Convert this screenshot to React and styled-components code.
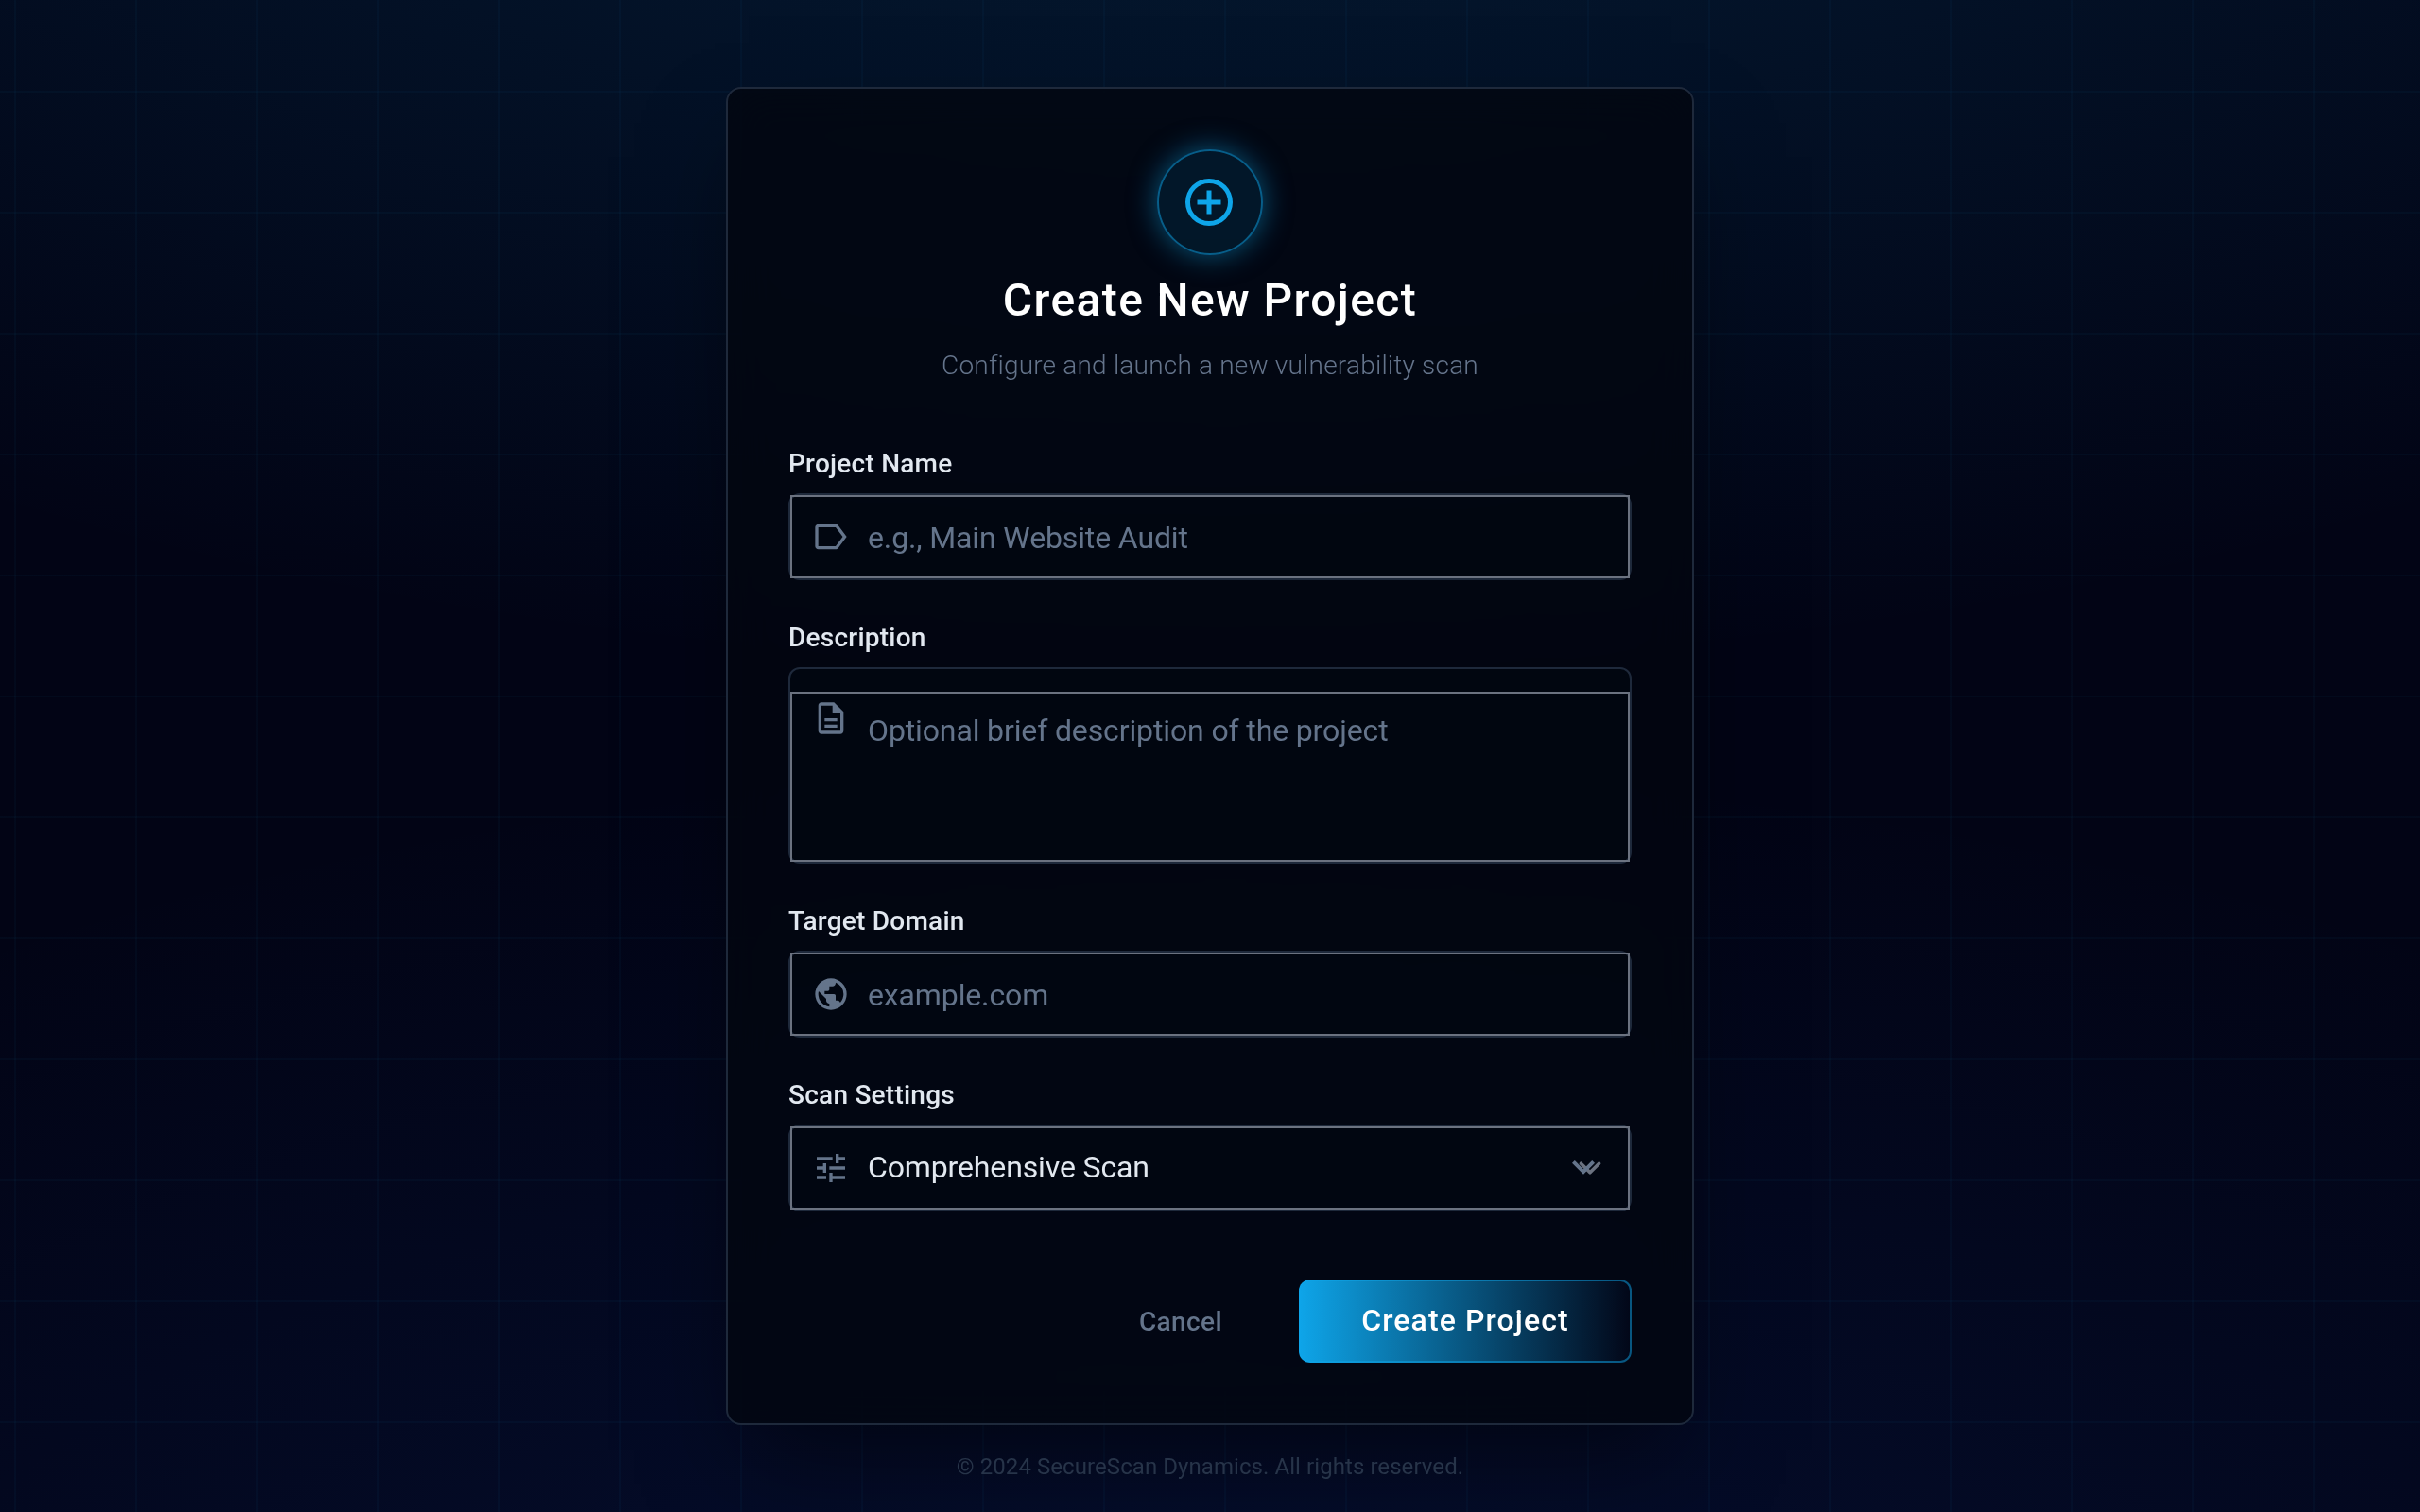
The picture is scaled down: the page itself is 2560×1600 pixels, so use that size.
import React from 'react';
import styled, { createGlobalStyle } from 'styled-components';

const Global = createGlobalStyle`
  *, *::before, *::after { box-sizing: border-box; }
  body { margin: 0; background: #020617; font-family: Roboto, "Noto Sans", sans-serif; }
  button, input, textarea, select { font-family: inherit; }
`;

const Page = styled.main`
  position: relative;
  display: flex;
  align-items: center;
  justify-content: center;
  width: 100%;
  height: 1600px;
  overflow: hidden;
  background:
    radial-gradient(2304px 1040px at 50% -320px, rgba(14, 165, 233, 0.15), transparent),
    radial-gradient(2304px 1120px at 50% 1920px, rgba(22, 82, 216, 0.14), transparent),
    #020415;

  &::before {
    content: '';
    position: absolute;
    inset: 0;
    background-image:
      linear-gradient(to right, rgba(14, 165, 233, 0.036) 2px, transparent 2px),
      linear-gradient(to bottom, rgba(14, 165, 233, 0.036) 2px, transparent 2px);
    background-size: 128px 128px;
    background-position: 15px 96px;
  }
`;

const Card = styled.section`
  position: relative;
  width: 1024px;
  height: 1416px;
  padding: 64px;
  display: flex;
  flex-direction: column;
  border: 2px solid #1e293b;
  border-radius: 16px;
  background: rgba(2, 6, 16, 0.82);
  backdrop-filter: blur(24px);
  box-shadow: 0 50px 100px -24px rgba(0, 0, 0, 0.5);
`;

const Header = styled.header`
  display: flex;
  flex-direction: column;
  align-items: center;
  height: 312px;
`;

const Badge = styled.div`
  display: flex;
  align-items: center;
  justify-content: center;
  width: 112px;
  height: 112px;
  padding-right: 2px;
  border: 2px solid rgba(14, 165, 233, 0.5);
  border-radius: 50%;
  background: rgba(14, 165, 233, 0.1);
  box-shadow: 0 0 30px rgba(14, 165, 233, 0.5);
`;

const Title = styled.h1`
  margin: 16px 0 0;
  font-size: 48px;
  line-height: 64px;
  font-weight: 500;
  letter-spacing: 1.38px;
  color: #fff;
`;

const Subtitle = styled.p`
  margin: 17px 0 0;
  font-size: 28px;
  line-height: 40px;
  font-weight: 300;
  letter-spacing: 0.2px;
  color: #64748b;
`;

const Form = styled.form`
  display: flex;
  flex-direction: column;
  gap: 40px;
`;

const Field = styled.div`
  display: flex;
  flex-direction: column;
  gap: 10px;
`;

const Label = styled.label`
  font-size: 28px;
  line-height: 42px;
  font-weight: 500;
  letter-spacing: 0.24px;
  color: #e2e8f0;
`;

const Shell = styled.div`
  position: relative;
  display: flex;
  padding-top: ${(p) => (p.$tall ? 24 : 0)}px;
  border: 2px solid #1e293b;
  border-radius: 12px;
  background: rgba(2, 6, 16, 0.6);
`;

const FieldIcon = styled.span`
  position: absolute;
  left: 23px;
  top: ${(p) => (p.$tall ? 32 : 24)}px;
  display: flex;
  color: #64748b;
`;

const Chevron = styled.span`
  position: absolute;
  right: 17px;
  top: 20px;
  display: flex;
  pointer-events: none;
`;

const controlStyles = `
  width: 100%;
  margin: 0;
  border: 2px solid #6b7280;
  border-radius: 0;
  outline: none;
  appearance: none;
  background: transparent;
  color: #e2e8f0;
  font-size: 32px;
  line-height: 48px;
  letter-spacing: -0.13px;
  &::placeholder { color: #64748b; opacity: 1; }
`;

const Input = styled.input`
  ${controlStyles}
  height: 88px;
  padding: 17px 24px 15px 80px;
`;

const TextArea = styled.textarea`
  ${controlStyles}
  height: 180px;
  padding: 15px 24px 16px 80px;
  resize: none;
`;

const Select = styled.select`
  ${controlStyles}
  height: 88px;
  padding: 15px 80px 17px 80px;
`;

const Actions = styled.div`
  display: flex;
  align-items: center;
  justify-content: flex-end;
  gap: 33px;
  margin-top: 32px;
`;

const Cancel = styled.button`
  height: 72px;
  padding: 0 48px;
  border: 0;
  background: transparent;
  color: #64748b;
  font-size: 28px;
  font-weight: 500;
  letter-spacing: 0.4px;
`;

const Submit = styled.button`
  width: 352px;
  height: 88px;
  padding: 0 0 2px;
  border: 2px solid rgba(14, 165, 233, 0.5);
  border-radius: 12px;
  background: linear-gradient(to right, #0ea5e9, #020617) border-box;
  color: #fff;
  font-size: 32px;
  font-weight: 500;
  letter-spacing: 1.1px;
`;

const Footer = styled.footer`
  position: absolute;
  left: 0;
  right: 0;
  bottom: 32px;
  text-align: center;
  font-size: 24px;
  line-height: 32px;
  letter-spacing: 0.07px;
  color: #273449;
`;

const PATHS = {
  add: 'M440-280h80v-160h160v-80H520v-160h-80v160H280v80h160v160Zm40 200q-83 0-156-31.5T197-197q-54-54-85.5-127T80-480q0-83 31.5-156T197-763q54-54 127-85.5T480-880q83 0 156 31.5T763-763q54 54 85.5 127T880-480q0 83-31.5 156T763-197q-54 54-127 85.5T480-80Zm0-80q134 0 227-93t93-227q0-134-93-227t-227-93q-134 0-227 93t-93 227q0 134 93 227t227 93Z',
  label: 'M160-160q-33 0-56.5-23.5T80-240v-480q0-33 23.5-56.5T160-800h440q19 0 36 8.5t28 23.5l216 288-216 288q-11 15-28 23.5t-36 8.5H160Zm0-80h440l180-240-180-240H160v480Z',
  description: 'M320-240h320v-80H320v80Zm0-160h320v-80H320v80ZM240-80q-33 0-56.5-23.5T160-160v-640q0-33 23.5-56.5T240-880h320l240 240v480q0 33-23.5 56.5T720-80H240Zm280-520v-200H240v640h480v-440H520Z',
  public: 'M480-80q-83 0-156-31.5T197-197q-54-54-85.5-127T80-480q0-83 31.5-156T197-763q54-54 127-85.5T480-880q83 0 156 31.5T763-763q54 54 85.5 127T880-480q0 83-31.5 156T763-197q-54 54-127 85.5T480-80Zm-40-82v-78q-33 0-56.5-23.5T360-320v-40L168-552q-3 18-5.5 36t-2.5 36q0 121 79.5 212T440-162Zm276-102q41-45 62.5-100.5T800-480q0-98-54.5-179T600-776v16q0 33-23.5 56.5T520-680h-80v80q0 17-11.5 28.5T400-560h-80v80h240q17 0 28.5 11.5T600-440v120h40q26 0 47 15.5t29 40.5Z',
  tune: 'M440-120v-240h80v80h320v80H520v80h-80Zm-320-80v-80h240v80H120Zm160-160v-80H120v-80h160v-80h80v240h-80Zm160-80v-80h400v80H440Zm160-160v-240h80v80h160v80H680v80h-80Zm-480-80v-80h400v80H120Z',
};

function Icon({ name, size = 40, color = 'currentColor' }) {
  return (
    <svg width={size} height={size} viewBox="0 -960 960 960" fill={color} aria-hidden="true">
      <path d={PATHS[name]} />
    </svg>
  );
}

function DoubleChevron() {
  return (
    <svg width="56" height="48" viewBox="0 0 56 48" fill="none" aria-hidden="true">
      <path
        d="M21.4 19.2 31 28.8 40.6 19.2"
        stroke="#6b7280"
        strokeWidth="3.6"
        strokeLinecap="round"
        strokeLinejoin="round"
      />
      <path d="M24 30.8 12 18.8 14.8 16 24 25.2 33.2 16 36 18.8Z" fill="#64748b" />
    </svg>
  );
}

export default function App() {
  return (
    <>
      <Global />
      <Page>
        <Card>
          <Header>
            <Badge><Icon name="add" size={60} color="#0ea5e9" /></Badge>
            <Title>Create New Project</Title>
            <Subtitle>Configure and launch a new vulnerability scan</Subtitle>
          </Header>
          <Form onSubmit={(e) => e.preventDefault()}>
            <Field>
              <Label htmlFor="name">Project Name</Label>
              <Shell>
                <FieldIcon><Icon name="label" /></FieldIcon>
                <Input id="name" placeholder="e.g., Main Website Audit" />
              </Shell>
            </Field>
            <Field>
              <Label htmlFor="description">Description</Label>
              <Shell $tall>
                <FieldIcon $tall><Icon name="description" /></FieldIcon>
                <TextArea id="description" placeholder="Optional brief description of the project" />
              </Shell>
            </Field>
            <Field>
              <Label htmlFor="domain">Target Domain</Label>
              <Shell>
                <FieldIcon><Icon name="public" /></FieldIcon>
                <Input id="domain" placeholder="example.com" />
              </Shell>
            </Field>
            <Field>
              <Label htmlFor="settings">Scan Settings</Label>
              <Shell>
                <FieldIcon><Icon name="tune" /></FieldIcon>
                <Select id="settings" defaultValue="full">
                  <option value="full">Comprehensive Scan</option>
                </Select>
                <Chevron><DoubleChevron /></Chevron>
              </Shell>
            </Field>
            <Actions>
              <Cancel type="button">Cancel</Cancel>
              <Submit type="submit">Create Project</Submit>
            </Actions>
          </Form>
        </Card>
        <Footer>© 2024 SecureScan Dynamics. All rights reserved.</Footer>
      </Page>
    </>
  );
}
